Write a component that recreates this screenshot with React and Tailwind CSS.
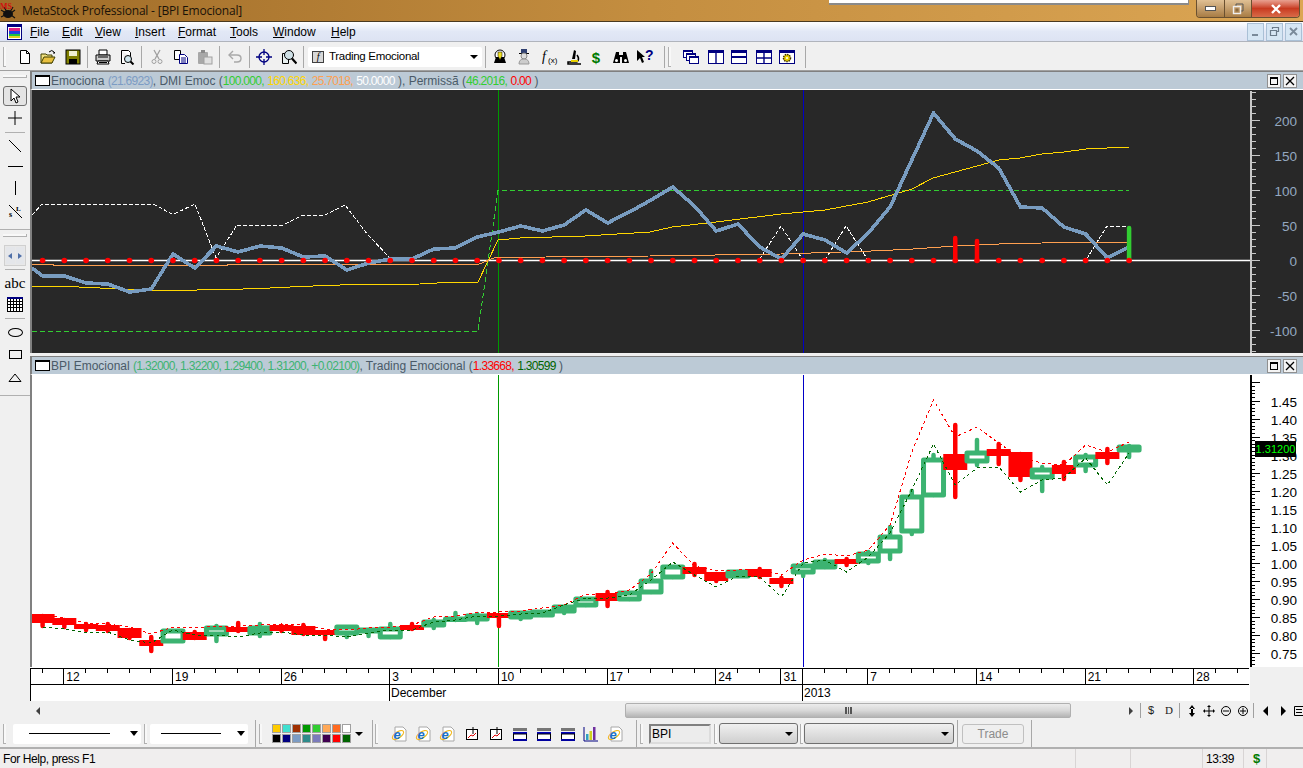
const X = (i) => 42.6 + 21.73 * i;
const pts = (ys) => ys.map((y, i) => `${X(i)},${y}`).join(' ');

const blue = [276,276,283,284,292,289,254,268,246,252,246,248,257,256,270,263,259,259,249,248,237,232,226,231,225,210,223,212,200,187,206,231,224,247,259,234,240,253,233,207,160,113,139,151,168,207,208,227,234,258,247];
const upperBand = [614,618,623,624,627,634,627,628,626,626,625,624,625,629,630,628,627,625,617,616,612,612,611,608,605,594,594,590,574,543,566,571,570,569,575,560,554,556,550,525,452,400,437,427,443,458,463,465,445,452,442];
const lowerBand = [627,629,633,632,640,643,630,635,635,637,633,632,635,635,637,633,630,630,622,620,616,616,614,613,605,598,598,595,580,562,575,587,576,577,597,563,560,572,557,533,490,444,485,468,467,492,480,478,458,485,453];

// top, bottom, wick top, wick bottom, colour
const candles = [
  [614,623,614,628,'r'],[618,625,618,629,'r'],[624,629,622,632,'r'],[625,631,622,633,'r'],[628,638,628,640,'r'],
  [640,646,635,653,'r'],[631,641,631,641,'g'],[632,640,630,640,'r'],[628,634,624,643,'g'],[627,632,621,633,'r'],
  [628,633,622,638,'g'],[625,631,624,633,'r'],[626,635,623,636,'r'],[630,635,630,641,'r'],[627,633,627,639,'g'],
  [630,631,628,638,'g'],[629,637,622,639,'g'],[625,630,622,631,'r'],[622,625,618,630,'g'],[619,619,611,622,'g'],
  [616,619,612,625,'g'],[613,618,613,628,'r'],[613,617,613,621,'g'],[612,615,612,617,'g'],[607,611,607,615,'g'],
  [599,605,599,607,'g'],[593,601,590,608,'r'],[593,599,593,601,'g'],[581,592,569,594,'g'],[567,577,567,579,'g'],
  [567,574,562,577,'r'],[572,581,572,583,'r'],[572,576,570,578,'g'],[569,577,567,579,'r'],[578,584,576,588,'r'],
  [566,572,562,578,'g'],[562,567,558,569,'g'],[559,564,557,567,'r'],[554,561,550,565,'g'],[537,551,525,561,'g'],
  [497,531,489,536,'g'],[460,495,453,497,'g'],[454,470,423,499,'r'],[453,461,438,467,'g'],[449,456,442,466,'r'],
  [452,477,452,482,'r'],[470,477,465,493,'g'],[465,474,460,481,'r'],[457,465,453,473,'g'],[452,459,447,465,'r'],
  [447,450,444,459,'g'],
];

const dates = [[1,'12'],[6,'19'],[11,'26'],[16,'3'],[21,'10'],[26,'17'],[31,'24'],[34,'31'],[38,'7'],[43,'14'],[48,'21'],[53,'28']];

function Ico({ className = '', children }) {
  return <svg viewBox="0 0 16 16" className={`w-4 h-4 shrink-0 ${className}`}>{children}</svg>;
}
const Sep = ({ className = '' }) => <div className={`w-px h-[22px] bg-[#a8a8a8] shrink-0 ${className}`} />;
const Grip = ({ className = '' }) => <div className={`w-[3px] h-[20px] border-l border-b border-[#b0b0b0] bg-[#f8f8f8] shrink-0 ${className}`} />;
const Arrow = ({ className = '' }) => <div className={`w-0 h-0 border-x-[4px] border-x-transparent border-t-[4px] border-t-black shrink-0 ${className}`} />;

function IE({ className }) {
  return (
    <Ico className={className}>
      <path d="M4 1h8l3 3v11H4z" fill="#fff" stroke="#a8a8a8" />
      <ellipse cx="7" cy="9" rx="6.5" ry="3" fill="none" stroke="#f0b820" strokeWidth="1.2" transform="rotate(-35 7 9)" />
      <text x="2.5" y="13" fontSize="13" fontWeight="700" fontStyle="italic" fill="#1a70c8" fontFamily="Liberation Sans, sans-serif">e</text>
    </Ico>
  );
}
function ChartBox({ className }) {
  return (
    <Ico className={className}>
      <rect x="2.5" y="3.5" width="11" height="10" fill="#fff" stroke="#000" />
      <path d="M4 12l3-3 2 1 3-3" fill="none" stroke="#e00000" />
      <path d="M9 1v7" stroke="#000" />
    </Ico>
  );
}
function PaneIco({ className }) {
  return (
    <Ico className={className}>
      <rect x="1" y="2" width="14" height="3" fill="#777" />
      <rect x="1" y="6" width="14" height="2" fill="#0000c0" />
      <rect x="1.5" y="8" width="13" height="6" fill="#fff" stroke="#000" />
      <rect x="1" y="13" width="14" height="2" fill="#0000a0" />
    </Ico>
  );
}
const WinGrid = ({ className, children }) => (
  <Ico className={className}>
    <rect x="0.5" y="1.5" width="15" height="13" fill="#fff" stroke="#000080" />
    <rect x="0" y="1" width="16" height="3" fill="#000080" />
    {children}
  </Ico>
);

function TitleBar() {
  return (
    <div className="h-[22px] flex items-start bg-linear-to-r from-[#a06c28] via-[#c48e40] to-[#dca654] border-b border-[#4a3a20] shrink-0">
      <svg viewBox="0 0 20 18" className="w-5 h-[18px] self-center">
        <ellipse cx="8" cy="12" rx="5" ry="4" fill="#111" />
        <path d="M1 8l5 3M1 15l4-2M15 8l-4 3M15 16l-4-3M4 5l3 5M13 5l-3 5" stroke="#111" strokeWidth="1.2" />
        <text x="0" y="7" fontSize="8" fontWeight="700" fill="#d01010" fontFamily="Liberation Serif, serif">MS</text>
      </svg>
      <span className="self-center ml-[2px] text-[12px] text-[#1a1208] font-['Open_Sans',sans-serif] tracking-[-0.2px]">MetaStock Professional - [BPI Emocional]</span>
      <div className="ml-auto w-[360px] h-[5px] bg-white border-b-2 border-r border-[#8a8a8a]" />
      <div className="ml-[7px] mr-[3px] flex h-[18px] border border-t-0 border-[#6a5030] rounded-b-[4px] overflow-hidden">
        <div className="w-[28px] flex items-center justify-center bg-linear-to-b from-[#e0c094] to-[#a87c44] border-r border-[#6a5030]">
          <div className="w-[11px] h-[5px] bg-white border border-[#555]" />
        </div>
        <div className="w-[27px] flex items-center justify-center bg-linear-to-b from-[#e0c094] to-[#a87c44] border-r border-[#6a5030]">
          <svg viewBox="0 0 12 12" className="w-3 h-3"><path d="M4 3V1h7v7H9" fill="none" stroke="#555" strokeWidth="1" /><rect x="1.5" y="3.5" width="7" height="7" fill="none" stroke="#eee" strokeWidth="1.4" /><rect x="3.5" y="5.5" width="3" height="3" fill="#8a6a40" /></svg>
        </div>
        <div className="w-[47px] flex items-center justify-center bg-linear-to-b from-[#e8a090] via-[#c83a20] to-[#d86a48]">
          <svg viewBox="0 0 12 10" className="w-[12px] h-[10px]"><path d="M2 1l8 8M10 1l-8 8" stroke="#fff" strokeWidth="2.4" /></svg>
        </div>
      </div>
    </div>
  );
}

const menus = [
  ['F', 'ile', 'w-[32px]'], ['E', 'dit', 'w-[33px]'], ['V', 'iew', 'w-[40px]'], ['I', 'nsert', 'w-[43px]'],
  ['F', 'ormat', 'w-[52px]'], ['T', 'ools', 'w-[43px]'], ['W', 'indow', 'w-[58px]'], ['H', 'elp', 'w-[40px]'],
];

function MenuBar() {
  return (
    <div className="h-[20px] flex items-center bg-linear-to-b from-white via-[#e2e8f6] to-[#dde3f3] border-b border-[#b0b4bc] shrink-0 text-[12px] text-black">
      <svg viewBox="0 0 15 16" className="w-[15px] h-4 ml-[7px]">
        <rect x="0.5" y="0.5" width="14" height="15" fill="#fff" stroke="#000080" />
        <rect x="0" y="0" width="15" height="3" fill="#000080" />
        <rect x="2" y="4" width="11" height="3" fill="#e02080" />
        <rect x="2" y="7" width="11" height="3" fill="#2040e0" />
        <rect x="2" y="10" width="11" height="2" fill="#20c040" />
        <rect x="2" y="12" width="11" height="2" fill="#e0d020" />
      </svg>
      <div className="flex ml-[8px]">
        {menus.map(([a, b, w], i) => (
          <span key={i} className={w}><span className="underline">{a}</span>{b}</span>
        ))}
      </div>
      <div className="ml-auto mr-[1px] flex gap-[2px]">
        {['min', 'rest', 'close'].map((k) => (
          <div key={k} className="w-[17px] h-[18px] bg-[#d6e6f4] border border-[#aac0d6] flex items-center justify-center">
            <svg viewBox="0 0 11 11" className="w-[11px] h-[11px]">
              {k === 'min' && <rect x="2" y="8" width="6" height="2" fill="#7a8a9a" />}
              {k === 'rest' && <path d="M3.5 3V1.5h6v4H8M1.5 4.5h6v5h-6z" fill="none" stroke="#6a7a8a" strokeWidth="1.2" />}
              {k === 'close' && <path d="M2 2l7 7M9 2l-7 7" stroke="#7a8a9a" strokeWidth="1.8" />}
            </svg>
          </div>
        ))}
      </div>
    </div>
  );
}

function Toolbar() {
  return (
    <div className="h-[29px] flex items-center pt-[2px] bg-[#f0f0f0] border-b border-[#a0a0a0] shrink-0">
      <Grip className="ml-[3px] mr-[-6px]" />
      <Ico className="ml-[17px]"><path d="M3.5 1.5h6l3 3v10h-9z" fill="#fff" stroke="#000" /><path d="M9.5 1.5v3h3" fill="none" stroke="#000" /></Ico>
      <Ico className="ml-[7px]"><path d="M1 5h5l1 1h5v8H1z" fill="#f0e080" stroke="#404000" /><path d="M1 14l3-6h11l-3 6z" fill="#e8c040" stroke="#404000" /><path d="M9 3q3-3 5 0l1 1-2 0" fill="none" stroke="#000" /></Ico>
      <Ico className="ml-[9px]"><rect x="1" y="1" width="14" height="14" fill="#808000" stroke="#000" /><rect x="4" y="2" width="8" height="5" fill="#f0f0d0" /><rect x="4" y="10" width="8" height="5" fill="#000" /></Ico>
      <Sep className="ml-[6px]" />
      <Ico className="ml-[7px]"><path d="M4 1h8v5H4z" fill="#fff" stroke="#000" /><path d="M1 6h14v6H1z" fill="#ccc" stroke="#000" /><path d="M3 12l-1 3h12l-1-3z" fill="#fff" stroke="#000" /><path d="M3 8h10M4 13.5h8" stroke="#000" /></Ico>
      <Ico className="ml-[8px]"><path d="M2.5 1.5h7l2 2v4M6 14.5H2.5v-13" fill="#fff" stroke="#000" /><circle cx="9" cy="10" r="3.5" fill="#cfe6ee" stroke="#000" /><path d="M11.5 12.5l3 3" stroke="#000" strokeWidth="2" /></Ico>
      <Sep className="ml-[6px]" />
      <Ico className="ml-[7px]"><path d="M5 1l5 9M11 1L6 10" stroke="#a0a0a0" strokeWidth="1.3" fill="none" /><circle cx="5" cy="12.5" r="2" fill="none" stroke="#a0a0a0" /><circle cx="11" cy="12.5" r="2" fill="none" stroke="#a0a0a0" /></Ico>
      <Ico className="ml-[8px]"><path d="M1.5 1.5h6v9h-6z" fill="#fff" stroke="#000" /><path d="M6.5 5.5h5l3 3v6h-8z" fill="#fff" stroke="#000080" /><path d="M8 9h5M8 11h5M8 13h5" stroke="#000080" /></Ico>
      <Ico className="ml-[8px]"><rect x="1" y="3" width="10" height="12" rx="1" fill="#a8a8a8" /><rect x="4" y="1" width="4" height="3" fill="#8a8a8a" /><rect x="7" y="8" width="8" height="7" fill="#e0e0e0" stroke="#a0a0a0" /></Ico>
      <Sep className="ml-[6px]" />
      <Ico className="ml-[7px]"><path d="M2 6h8q4 0 4 3.5T10 13H7" fill="none" stroke="#a8a8a8" strokeWidth="1.4" /><path d="M6 2L2 6l4 4" fill="none" stroke="#a8a8a8" strokeWidth="1.4" /></Ico>
      <Sep className="ml-[6px]" />
      <Ico className="ml-[6px]"><circle cx="8" cy="8" r="5" fill="none" stroke="#000080" strokeWidth="1.3" /><path d="M8 0v6M8 10v6M0 8h6M10 8h6" stroke="#000080" strokeWidth="1.3" /></Ico>
      <Ico className="ml-[9px]"><path d="M1.5 4.5h6v10h-6z" fill="#e8f0f0" stroke="#000" /><circle cx="8" cy="6" r="4.5" fill="#cfe0e6" stroke="#000" /><path d="M11 9.5l4.5 5" stroke="#000" strokeWidth="2.2" /></Ico>
      <Sep className="ml-[6px]" />
      <div className="ml-[4px] w-[174px] h-[20px] bg-white rounded-[2px] flex items-center shrink-0 text-[11.5px] tracking-[-0.3px] text-black">
        <span className="ml-[4px] w-[12px] h-[12px] bg-[#d8d8d8] border border-[#404040] flex items-center justify-center font-['Liberation_Serif',serif] italic text-[10px] leading-none">f</span>
        <span className="ml-[5px]">Trading Emocional</span>
        <Arrow className="ml-auto mr-[4px]" />
      </div>
      <Sep className="ml-[3px]" />
      <Ico className="ml-[6px]"><circle cx="8" cy="6" r="5" fill="#fff" stroke="#000" /><path d="M4 8h8l2 6H2z" fill="#000" /><path d="M6 7V3h4v4l-2 4z" fill="#f0e020" stroke="#000" strokeWidth=".5" /></Ico>
      <Ico className="ml-[8px]"><rect x="5" y="0" width="6" height="4" fill="#304070" /><path d="M3 4.5h10" stroke="#000" /><circle cx="8" cy="7" r="3" fill="#ddd" stroke="#888" /><path d="M3 15q0-5 5-5t5 5z" fill="#ccc" stroke="#999" /></Ico>
      <Ico className="ml-[10px]"><text x="0" y="12" fontSize="14" fontStyle="italic" fontFamily="Liberation Serif, serif" fill="#000">f</text><text x="6" y="14" fontSize="8" fontFamily="Liberation Sans, sans-serif" fill="#000">(x)</text></Ico>
      <Ico className="ml-[8px]"><path d="M8 1l2 1-1 8-3 0z" fill="#000" /><path d="M11 6q3 4 0 7H2v2h13" fill="none" stroke="#000" strokeWidth="1.5" /><path d="M5 12h7" stroke="#e8d000" strokeWidth="2" /></Ico>
      <Ico className="ml-[6px]"><text x="8" y="14" textAnchor="middle" fontSize="15" fontWeight="700" fill="#007a00" fontFamily="Liberation Sans, sans-serif">$</text></Ico>
      <Ico className="ml-[9px]"><path d="M3 3h3v3h4V3h3l3 11H9V8H7v6H0z" fill="#000" /><circle cx="3.5" cy="11.5" r="1.5" fill="#fff" /><circle cx="12.5" cy="11.5" r="1.5" fill="#fff" /></Ico>
      <svg viewBox="0 0 16 16" className="w-4 h-4 ml-[8px] shrink-0 overflow-visible"><path d="M0 1l8 7H5l2 5-2 1-2-5-3 3z" fill="#000" /><text x="8" y="11" fontSize="14" fontWeight="700" fill="#000080" fontFamily="Liberation Sans, sans-serif">?</text></svg>
      <Sep className="ml-[11px]" />
      <Grip className="ml-[3px]" />
      <Ico className="ml-[12px]"><rect x="0.5" y="1.5" width="9" height="7" fill="#fff" stroke="#000080" /><rect x="0" y="1" width="10" height="2" fill="#000080" /><rect x="3.5" y="4.5" width="9" height="7" fill="#fff" stroke="#000080" /><rect x="3" y="4" width="10" height="2" fill="#000080" /><rect x="6.5" y="7.5" width="9" height="7" fill="#fff" stroke="#000080" /><rect x="6" y="7" width="10" height="2" fill="#000080" /></Ico>
      <WinGrid className="ml-[9px]"><path d="M8 3v12" stroke="#000080" strokeWidth="1.4" /></WinGrid>
      <WinGrid className="ml-[7px]"><rect x="0" y="7" width="16" height="2" fill="#000080" /></WinGrid>
      <WinGrid className="ml-[9px]"><path d="M8 3v12M0 9h16" stroke="#000080" strokeWidth="1.4" /></WinGrid>
      <WinGrid className="ml-[7px]"><circle cx="8" cy="9" r="3.5" fill="#e8d000" stroke="#403000" strokeWidth="1.5" strokeDasharray="1.5 .8" /><circle cx="8" cy="9" r="1" fill="#fff" /></WinGrid>
      <Sep className="ml-[10px]" />
    </div>
  );
}

const Hr = ({ className = '' }) => <div className={`h-px bg-[#b0b0b0] ${className}`} />;

function SideTools() {
  return (
    <div className="w-[30px] shrink-0 bg-[#f0f0f0] flex flex-col items-stretch">
      <div className="h-[11px] flex items-center px-[3px]"><div className="w-full h-[3px] border-b border-r border-[#b0b0b0] bg-[#f8f8f8]" /></div>
      <div className="mt-[4px] ml-[3px] w-[24px] h-[20px] bg-[#e4e4e4] border border-[#707070] rounded-[3px] flex items-center justify-center">
        <svg viewBox="0 0 12 16" className="w-3 h-4"><path d="M2 1v12l3-3 2 5 2-1-2-5h4z" fill="#fff" stroke="#000" /></svg>
      </div>
      <div className="mt-[2px] h-[20px] flex items-center justify-center"><svg viewBox="0 0 14 14" className="w-[14px] h-[14px]"><path d="M7 0v14M0 7h14" stroke="#000" /></svg></div>
      <div className="h-[8px] flex items-center px-[5px]"><Hr className="w-full" /></div>
      <div className="h-[19px] flex items-center justify-center"><svg viewBox="0 0 12 12" className="w-3 h-3"><path d="M0 0l12 12" stroke="#000" /></svg></div>
      <div className="h-[23px] flex items-center justify-center"><div className="w-[15px] h-px bg-black" /></div>
      <div className="h-[20px] flex items-center justify-center"><div className="w-px h-[14px] bg-black" /></div>
      <div className="mt-[1px] h-[24px] flex items-center justify-center">
        <svg viewBox="0 0 15 15" className="w-[15px] h-[15px]">
          <path d="M1 1l13 13" stroke="#000" />
          <text x="8" y="7" fontSize="7" fontWeight="700" fontFamily="Liberation Serif, serif">L</text>
          <text x="1" y="13" fontSize="8" fontWeight="700" fontFamily="Liberation Serif, serif">s</text>
        </svg>
      </div>
      <div className="h-[6px]" />
      <Hr />
      <div className="h-[10px] flex items-center px-[3px]"><div className="w-full h-[3px] border-b border-r border-[#b0b0b0] bg-[#f8f8f8]" /></div>
      <div className="mt-[5px] ml-[4px] w-[22px] h-[21px] flex gap-px border border-[#d0d0d0] bg-[#e8e8e8] p-px">
        <div className="flex-1 bg-[#e4e6ea] flex items-center justify-center"><div className="w-0 h-0 border-y-[3px] border-y-transparent border-r-[4px] border-r-[#5070a8]" /></div>
        <div className="flex-1 bg-[#e4e6ea] flex items-center justify-center"><div className="w-0 h-0 border-y-[3px] border-y-transparent border-l-[4px] border-l-[#5070a8]" /></div>
      </div>
      <div className="h-[6px] flex items-center px-[5px]"><Hr className="w-full" /></div>
      <div className="h-[22px] flex items-center justify-center text-[15px] font-['Liberation_Serif',serif] text-black">abc</div>
      <div className="h-[20px] flex items-center justify-center">
        <svg viewBox="0 0 16 15" className="w-4 h-[15px]">
          <rect x="0.5" y="0.5" width="15" height="14" fill="#fff" stroke="#000" />
          <rect x="0" y="0" width="16" height="2" fill="#000080" />
          <path d="M3.5 2v13M6.5 2v13M9.5 2v13M12.5 2v13M0 4.5h16M0 7.5h16M0 10.5h16" stroke="#000" />
        </svg>
      </div>
      <div className="h-[8px] flex items-center px-[5px]"><Hr className="w-full" /></div>
      <div className="h-[20px] flex items-center justify-center"><div className="w-[15px] h-[9px] rounded-[50%] border border-black" /></div>
      <div className="mt-[1px] h-[22px] flex items-center justify-center"><div className="w-[13px] h-[9px] border border-black" /></div>
      <div className="mt-[1px] h-[22px] flex items-center justify-center"><svg viewBox="0 0 14 9" className="w-[14px] h-[9px]"><path d="M7 1l6 7.5H1z" fill="none" stroke="#000" /></svg></div>
      <div className="h-[7px]" />
      <Hr />
    </div>
  );
}

function PaneTitle({ children }) {
  return (
    <div className="h-[19px] shrink-0 flex items-center bg-[#bccad6] border-t border-[#808080] border-b border-b-white border-l-2 border-l-[#808080] text-[12px] text-[#4a5a68]">
      <svg viewBox="0 0 15 11" className="w-[15px] h-[11px] ml-[3px]"><rect x="0.5" y="0.5" width="14" height="10" fill="#fff" stroke="#000" /><rect x="0" y="0" width="15" height="2" fill="#000" /></svg>
      <span className="ml-[1px] mt-[1px] whitespace-nowrap">{children}</span>
      <div className="ml-auto mr-[6px] flex gap-[2px]">
        <div className="w-[14px] h-[14px] bg-[#f4f4f4] border border-[#909090] flex items-center justify-center"><div className="w-[8px] h-[8px] border border-black border-t-2" /></div>
        <div className="w-[14px] h-[14px] bg-[#f4f4f4] border border-[#909090] flex items-center justify-center"><svg viewBox="0 0 10 10" className="w-[10px] h-[10px]"><path d="M1 1l8 8M9 1l-8 8" stroke="#000" strokeWidth="1.3" /></svg></div>
      </div>
    </div>
  );
}

const labelFont = 'Liberation Sans, sans-serif';

function UpperChart() {
  const ticks = [];
  for (let k = -13; k <= 24; k++) ticks.push(k);
  return (
    <div className="h-[263px] shrink-0 border-l-2 border-[#808080]">
      <svg viewBox="32 90 1271 263" className="block w-[1271px] h-[263px]">
        <rect x="32" y="90" width="1271" height="263" fill="#282828" />
        <path d="M498.5 90v263" stroke="#009900" />
        <path d="M803.5 90v263" stroke="#0000c8" />
        <path d="M32 260.5h1219" stroke="#fff" strokeWidth="1.3" />
        <polyline points="32,215 42,204 153,204 173,214.5 195,204 216,258 237,225 283,225 303,215 325,215 345,205 368,235 390,258 412,260 759,260 781,226 803,260 825,260 846,226 868,260 1086,260 1107,226 1129,226" fill="none" stroke="#fff" strokeDasharray="4 2" shapeRendering="crispEdges" />
        <polyline points="32,331.5 478,331.5 498,190.5 1129,190.5" fill="none" stroke="#32cd32" strokeDasharray="5 3" shapeRendering="crispEdges" />
        <polyline points="32,286.5 68,286.5 100,288 130,289.5 165,290.5 230,289.5 270,288 300,286.5 340,285 420,284 455,282 478,282 498,240 520,238 585,236 650,232 672,227 716,222 781,214 825,210 868,202 912,189 933,178 955,172 977,166 999,160 1020,158 1042,154 1064,152 1086,149 1107,148 1129,147" fill="none" stroke="#ffd700" shapeRendering="crispEdges" />
        <polyline points="32,264.5 53,264.5 54,265.5 227,265.5 228,264.5 478,264.5 495,257.5 650,256 781,254 880,250.7 913,249 955,246 999,244 1042,243 1129,242" fill="none" stroke="#ffa050" shapeRendering="crispEdges" />
        <polyline points={`32,268 ${pts(blue)}`} fill="none" stroke="#789cc0" strokeWidth="3.6" strokeLinejoin="round" shapeRendering="crispEdges" />
        {[42, 43].map((i) => (
          <path key={i} d={`M${X(i)} ${i === 42 ? 238 : 241}V260`} stroke="#ff0000" strokeWidth="4.5" strokeLinecap="round" />
        ))}
        <path d={`M${X(50)} 228V260`} stroke="#32cd32" strokeWidth="4.5" strokeLinecap="round" />
        {blue.map((_, i) => <circle key={i} cx={X(i)} cy="260.5" r="2.8" fill="#ff0000" />)}
        <path d="M1251 91v262" stroke="#c8c8c8" strokeWidth="2" />
        {ticks.map((k) => {
          const y = 260.5 - 7 * k;
          return <path key={k} d={`M1251 ${y}h${k % 5 === 0 ? 9 : 5}`} stroke="#c8c8c8" />;
        })}
        {[200, 150, 100, 50, 0, -50, -100].map((v) => (
          <text key={v} x="1297" y={260 - v * 0.7 + 6} textAnchor="end" fontSize="13.5" fill="#94a8c0" fontFamily={labelFont}>{v}</text>
        ))}
      </svg>
    </div>
  );
}

function LowerChart() {
  const ticks = [];
  for (let k = -5; k <= 74; k++) ticks.push(k);
  const labels = ['1.45','1.40','1.35','1.30','1.25','1.20','1.15','1.10','1.05','1.00','0.95','0.90','0.85','0.80','0.75'];
  return (
    <div className="h-[292px] shrink-0 border-l-2 border-[#808080]">
      <svg viewBox="32 375 1271 292" className="block w-[1271px] h-[292px]">
        <rect x="32" y="375" width="1271" height="292" fill="#fff" />
        <path d="M498.5 375v292" stroke="#009900" />
        <path d="M803.5 375v292" stroke="#0000c8" />
        {candles.map(([t, b, wt, wb, c], i) => {
          const x = X(i);
          const col = c === 'r' ? '#ff0000' : '#3cb371';
          return (
            <g key={i}>
              <path d={`M${x} ${wt + 2}V${wb - 2}`} stroke={col} strokeWidth="4.5" strokeLinecap="round" />
              {c === 'r'
                ? <rect x={x - 12} y={t} width="24" height={b - t} fill={col} />
                : <rect x={x - 10} y={t} width="20" height={Math.max(b - t, 0.5)} fill="#fff" stroke={col} strokeWidth="5" strokeLinejoin="round" />}
            </g>
          );
        })}
        <polyline points={pts(upperBand)} fill="none" stroke="#ff0000" strokeDasharray="3 3" shapeRendering="crispEdges" />
        <polyline points={pts(lowerBand)} fill="none" stroke="#006400" strokeDasharray="3 3" shapeRendering="crispEdges" />
        <path d="M1251 375v292" stroke="#000" strokeWidth="2" />
        {ticks.map((k) => {
          const y = 400.5 + 3.61 * k;
          return <path key={k} d={`M1251 ${Math.round(y) + 0.5}h${k % 5 === 0 ? 9 : 4}`} stroke="#000" />;
        })}
        {labels.map((l, i) => (
          <text key={l} x="1297" y={400 + 18.05 * i + 6.5} textAnchor="end" fontSize="13.5" fill="#000" fontFamily={labelFont}>{l}</text>
        ))}
        <rect x="1255" y="441" width="41" height="16" fill="#000" />
        <text x="1275.5" y="453" textAnchor="middle" fontSize="11" fill="#00ff00" fontFamily={labelFont}>1.31200</text>
      </svg>
    </div>
  );
}

function DateAxis() {
  const minor = [];
  for (let i = -1; i <= 55; i++) minor.push(i);
  return (
    <svg viewBox="31 667 1272 34" className="block w-[1272px] h-[34px] shrink-0">
      <rect x="31" y="667" width="1220" height="34" fill="#fff" />
      <path d="M31 668.5h1219M31 684.5h1219M31.5 668v33" stroke="#000" />
      {minor.map((i) => <path key={i} d={`M${Math.round(X(i)) + 0.5} 669v4`} stroke="#000" />)}
      {dates.map(([i, t]) => (
        <g key={t}>
          <path d={`M${Math.round(X(i)) + 0.5} 669v15`} stroke="#000" />
          <text x={X(i) + 3} y="681" fontSize="12" fill="#000" fontFamily={labelFont}>{t}</text>
        </g>
      ))}
      <path d="M803.5 669v32M390.5 684v17" stroke="#000" />
      <text x="392" y="697" fontSize="12" fill="#000" fontFamily={labelFont}>December</text>
      <text x="805" y="697" fontSize="12" fill="#000" fontFamily={labelFont}>2013</text>
    </svg>
  );
}

const Tri = ({ dir, className = '' }) => (
  dir === 'l'
    ? <div className={`w-0 h-0 border-y-[4px] border-y-transparent border-r-[4px] border-r-[#404040] shrink-0 ${className}`} />
    : <div className={`w-0 h-0 border-y-[4px] border-y-transparent border-l-[4px] border-l-[#404040] shrink-0 ${className}`} />
);

const Mini = ({ className, children }) => (
  <svg viewBox="0 0 12 12" className={`w-3 h-3 shrink-0 ${className}`}>{children}</svg>
);

function ScrollRow() {
  return (
    <div className="mt-[2px] h-[15px] shrink-0 flex items-center bg-[#f0f0f0]">
      <Tri dir="l" className="ml-[6px]" />
      <div className="ml-[585px] w-[446px] h-[15px] bg-linear-to-b from-[#ececec] via-[#d8d8d8] to-[#b4b4b4] border border-[#b0b0b0] rounded-[2px] flex items-center justify-center shrink-0">
        <div className="w-[7px] h-[7px] border-x-2 border-[#555] flex justify-center"><div className="w-px h-full bg-[#555]" /></div>
      </div>
      <Tri dir="r" className="ml-[58px]" />
      <div className="w-px h-[15px] bg-[#a0a0a0] ml-[7px] shrink-0" />
      <span className="ml-[7px] w-[8px] text-[11px] text-[#202020] leading-none shrink-0">$</span>
      <span className="ml-[9px] w-[8px] text-[11px] font-['Liberation_Serif',serif] text-[#202020] leading-none shrink-0">D</span>
      <div className="w-px h-[15px] bg-[#a0a0a0] ml-[6px] shrink-0" />
      <Mini className="ml-[6px]"><path d="M6 0L3 4h6zM6 12L3 8h6zM5 3h2v6H5z" fill="#000" /></Mini>
      <Mini className="ml-[5px]"><path d="M6 1v10M1 6h10" stroke="#000" /><path d="M6 0L4 2h4zM6 12l-2-2h4zM0 6l2-2v4zM12 6l-2-2v4z" fill="#000" /></Mini>
      <Mini className="ml-[5px]"><circle cx="6" cy="6" r="4.5" fill="none" stroke="#000" /><path d="M3 6h6" stroke="#000" /></Mini>
      <Mini className="ml-[5px]"><circle cx="6" cy="6" r="4.5" fill="none" stroke="#000" /><path d="M3 6h6M6 3v6" stroke="#000" /></Mini>
      <div className="w-px h-[15px] bg-[#a0a0a0] ml-[4px] shrink-0" />
      <Mini className="ml-[6px]"><path d="M8 1v10L3 6z" fill="#000" /></Mini>
      <Mini className="ml-[5px]"><path d="M4 1v10l5-5z" fill="#000" /></Mini>
      <Mini className="ml-[4px]"><path d="M1.5 1.5h9v9h-9zM3 4.5h6M3 7.5h6" fill="none" stroke="#000" /></Mini>
    </div>
  );
}

const swatches = [
  'bg-[#ffcc00]','bg-[#40e0d0]','bg-[#a03000]','bg-[#009900]','bg-[#32cd32]','bg-[#ffa858]','bg-[#ff6a20]','bg-white',
  'bg-black','bg-[#000080]','bg-[#7c9cc4]','bg-[#2e8b8b]','bg-[#7b7bbb]','bg-[#400050]','bg-[#ff0000]','bg-[#006400]',
];

function LineCombo({ className, inner, lineMl }) {
  return (
    <div className={`h-[20px] bg-white rounded-[2px] flex items-center shrink-0 ${className}`}>
      <div className={`h-px bg-black ${lineMl} ${inner}`} />
      <Arrow className="ml-auto mr-[3px] border-x-[4px] border-t-[5px]" />
    </div>
  );
}

function BottomBar() {
  return (
    <div className="h-[29px] shrink-0 flex items-center bg-[#f0f0f0] border-b-2 border-[#b0b0b0]">
      <Grip className="ml-[3px]" />
      <LineCombo className="ml-[7px] w-[128px]" lineMl="ml-[16px]" inner="w-[81px]" />
      <Grip className="ml-[3px]" />
      <LineCombo className="ml-[3px] w-[98px]" lineMl="ml-[11px]" inner="w-[60px]" />
      <Sep className="ml-[7px] h-[27px]" />
      <Grip className="ml-[3px]" />
      <div className="ml-[10px] grid grid-cols-8 gap-[1px] shrink-0">
        {swatches.map((s, i) => <div key={i} className={`w-[9px] h-[9px] border border-[#a0a0a0] ${s}`} />)}
      </div>
      <Arrow className="ml-[4px] border-x-[3px] border-t-[3px]" />
      <Sep className="ml-[9px] h-[27px]" />
      <Grip className="ml-[2px]" />
      <IE className="ml-[13px]" />
      <IE className="ml-[8px]" />
      <IE className="ml-[8px]" />
      <ChartBox className="ml-[9px]" />
      <ChartBox className="ml-[8px]" />
      <PaneIco className="ml-[8px]" />
      <PaneIco className="ml-[8px]" />
      <PaneIco className="ml-[8px]" />
      <Ico className="ml-[7px]">
        <path d="M1 1v14h14" fill="none" stroke="#000080" />
        <rect x="3" y="8" width="2.5" height="6" fill="#30a0c0" />
        <rect x="6.5" y="5" width="2.5" height="9" fill="#d0d020" />
        <rect x="10" y="1" width="2.5" height="13" fill="#7030a0" />
      </Ico>
      <IE className="ml-[8px]" />
      <Sep className="ml-[13px] h-[27px]" />
      <Grip className="ml-[3px]" />
      <div className="ml-[6px] w-[62px] h-[20px] bg-[#ececec] border-2 border-t-[#808080] border-l-[#808080] border-r-[#dcdcdc] border-b-[#dcdcdc] flex items-center text-[12px] text-black pl-[1px] shrink-0">BPI</div>
      <Grip className="ml-[3px]" />
      <div className="ml-[2px] w-[79px] h-[21px] bg-linear-to-b from-[#f0f0f0] to-[#cfcfcf] border border-[#707070] rounded-[3px] flex items-center shrink-0"><Arrow className="ml-auto mr-[4px]" /></div>
      <Grip className="ml-[2px]" />
      <div className="ml-[1px] w-[150px] h-[21px] bg-linear-to-b from-[#f0f0f0] to-[#cfcfcf] border border-[#707070] rounded-[3px] flex items-center shrink-0"><Arrow className="ml-auto mr-[4px]" /></div>
      <Sep className="ml-[3px] h-[27px]" />
      <div className="ml-[4px] w-[62px] h-[20px] bg-[#efefef] border border-[#c0c0c0] rounded-[3px] flex items-center justify-center text-[12px] text-[#8c8c8c] shrink-0">Trade</div>
      <Sep className="ml-[7px] h-[27px]" />
    </div>
  );
}

function StatusBar() {
  const cell = 'h-full border-l border-[#d8d4d4] flex items-center shrink-0';
  return (
    <div className="flex-1 flex items-center bg-[#f0eeee] text-[12px] tracking-[-0.4px] text-black">
      <span className="ml-[3px] w-[1072px] shrink-0">For Help, press F1</span>
      <div className={`${cell} w-[55px]`} />
      <div className={`${cell} w-[72px]`} />
      <div className={`${cell} w-[41px] pl-[3px]`}>13:39</div>
      <div className={`${cell} w-[23px] pl-[9px] text-[#007a00] font-bold text-[13px]`}>$</div>
      <div className={`${cell} flex-1`} />
    </div>
  );
}

export default function App() {
  const num = 'tracking-[-0.7px]';
  return (
    <div className="w-[1303px] h-[768px] flex flex-col overflow-hidden bg-[#f0f0f0] font-['Liberation_Sans',sans-serif]">
      <TitleBar />
      <MenuBar />
      <Toolbar />
      <div className="h-[649px] shrink-0 flex">
        <SideTools />
        <div className="flex-1 flex flex-col min-w-0 w-[1273px]">
          <PaneTitle>
            Emociona <span className={`text-[#7c9cc4] ${num}`}>(21.6923)</span>, DMI Emoc (<span className={`text-[#32cd32] ${num}`}>100.000,</span>{' '}
            <span className={`text-[#ffd700] ${num}`}>160.636,</span> <span className={`text-[#ffa050] ${num}`}>25.7018,</span>{' '}
            <span className={`text-white ${num}`}>50.0000</span> ), Permissã (<span className={`text-[#32cd32] ${num}`}>46.2016,</span>{' '}
            <span className={`text-[#ff0000] ${num}`}>0.00</span> )
          </PaneTitle>
          <UpperChart />
          <div className="h-[3px] shrink-0" />
          <PaneTitle>
            BPI Emocional <span className={`text-[#3cb371] ${num}`}>(1.32000, 1.32200, 1.29400, 1.31200, +0.02100)</span>, Trading Emocional (
            <span className={`text-[#ff0000] ${num}`}>1.33668,</span> <span className={`text-[#006400] ${num}`}>1.30599</span> )
          </PaneTitle>
          <LowerChart />
          <DateAxis />
          <ScrollRow />
        </div>
      </div>
      <BottomBar />
      <StatusBar />
    </div>
  );
}
